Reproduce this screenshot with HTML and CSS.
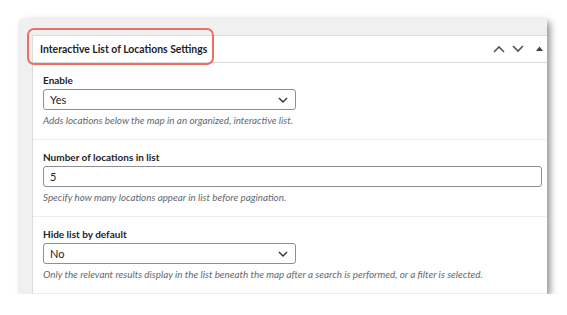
FILE: index.html
```html
<!DOCTYPE html>
<html lang="en">
<head>
    <meta charset="UTF-8">
    <meta name="viewport" content="width=device-width, initial-scale=1.0">
    <title>Interactive List of Locations Settings</title>
    <link rel="stylesheet" href="styles.css">
</head>
<body>

    <div class="painel">
        <!-- destaque vermelho em volta do titulo -->
        <div class="destaque"></div>

        <div class="postbox">
            <div class="postbox-header">
                <h2>Interactive List of Locations Settings</h2>
                <div class="acoes">
                    <svg class="seta" width="12" height="8" viewBox="0 0 12 8"><path d="M1 7 L6 2 L11 7" fill="none" stroke="#50575e" stroke-width="1.6"/></svg>
                    <svg class="seta" width="12" height="8" viewBox="0 0 12 8"><path d="M1 1 L6 6 L11 1" fill="none" stroke="#50575e" stroke-width="1.6"/></svg>
                    <svg class="toggle" width="7" height="5" viewBox="0 0 7 5"><path d="M0 5 L3.5 0.5 L7 5 Z" fill="#3c434a"/></svg>
                </div>
            </div>

            <div class="campo">
                <label>Enable</label>
                <div class="select">
                    <span>Yes</span>
                    <svg width="10" height="6" viewBox="0 0 10 6"><path d="M1 1 L5 5 L9 1" fill="none" stroke="#2c3338" stroke-width="1.4"/></svg>
                </div>
                <p class="descricao">Adds locations below the map in an organized, interactive list.</p>
            </div>

            <div class="campo">
                <label>Number of locations in list</label>
                <div class="input">5</div>
                <p class="descricao">Specify how many locations appear in list before pagination.</p>
            </div>

            <div class="campo">
                <label>Hide list by default</label>
                <div class="select">
                    <span>No</span>
                    <svg width="10" height="6" viewBox="0 0 10 6"><path d="M1 1 L5 5 L9 1" fill="none" stroke="#2c3338" stroke-width="1.4"/></svg>
                </div>
                <p class="descricao">Only the relevant results display in the list beneath the map after a search is performed, or a filter is selected.</p>
            </div>
        </div>
    </div>

</body>
</html>
```

FILE: styles.css
```css
/* Pagina */
body {
    margin: 0;
    background-color: #ffffff;
    font-family: Lato, "Open Sans", Arial, sans-serif;
    color: #1d2327;
    padding: 19px 0 0 20px;
}

/* Painel cinza com sombra */
.painel {
    position: relative;
    width: 515px;
    height: 259px;
    padding: 16px 0 0 12px;
    background-color: #f0f0f1;
    overflow: hidden;
    box-shadow: 3px 3px 7px rgba(0, 0, 0, 0.45);
}

.destaque {
    position: absolute;
    left: 7px;
    top: 9px;
    width: 183px;
    height: 33px;
    border: 2px solid #ee6f62;
    border-radius: 7px;
    z-index: 2;
}

.postbox {
    background-color: #ffffff;
    border-top: 1px solid #dcdcde;
    border-left: 1px solid #dcdcde;
    height: 100%;
}

.postbox-header {
    display: flex;
    align-items: center;
    justify-content: space-between;
    height: 26px;
    padding-left: 7px;
    border-bottom: 1px solid #dcdcde;
}

.postbox-header h2 {
    margin: 0;
    font-size: 10.4px;
    font-weight: 700;
}

.acoes {
    display: flex;
    align-items: center;
    gap: 7px;
    padding-right: 4px;
}

.acoes .toggle {
    margin-left: 5px;
    margin-top: -2px;
}

/* Campos */
.campo {
    padding: 10px 5px 12px 10px;
    border-bottom: 1px solid #ededee;
}

.campo + .campo {
    padding-top: 10px;
}

.campo label {
    display: block;
    font-size: 10px;
    font-weight: 700;
    line-height: 15px;
    margin-bottom: 1px;
}

.select, .input {
    box-sizing: border-box;
    height: 21px;
    border: 1px solid #8c8f94;
    border-radius: 3px;
    font-size: 11px;
    padding: 0 7px 0 6px;
    display: flex;
    align-items: center;
}

.select {
    width: 253px;
    justify-content: space-between;
}

.input {
    width: 499px;
    margin-top: 1px;
}

.descricao {
    margin: 3px 0 0 0;
    font-size: 9.85px;
    font-style: italic;
    line-height: 14px;
    color: #646970;
}
```
